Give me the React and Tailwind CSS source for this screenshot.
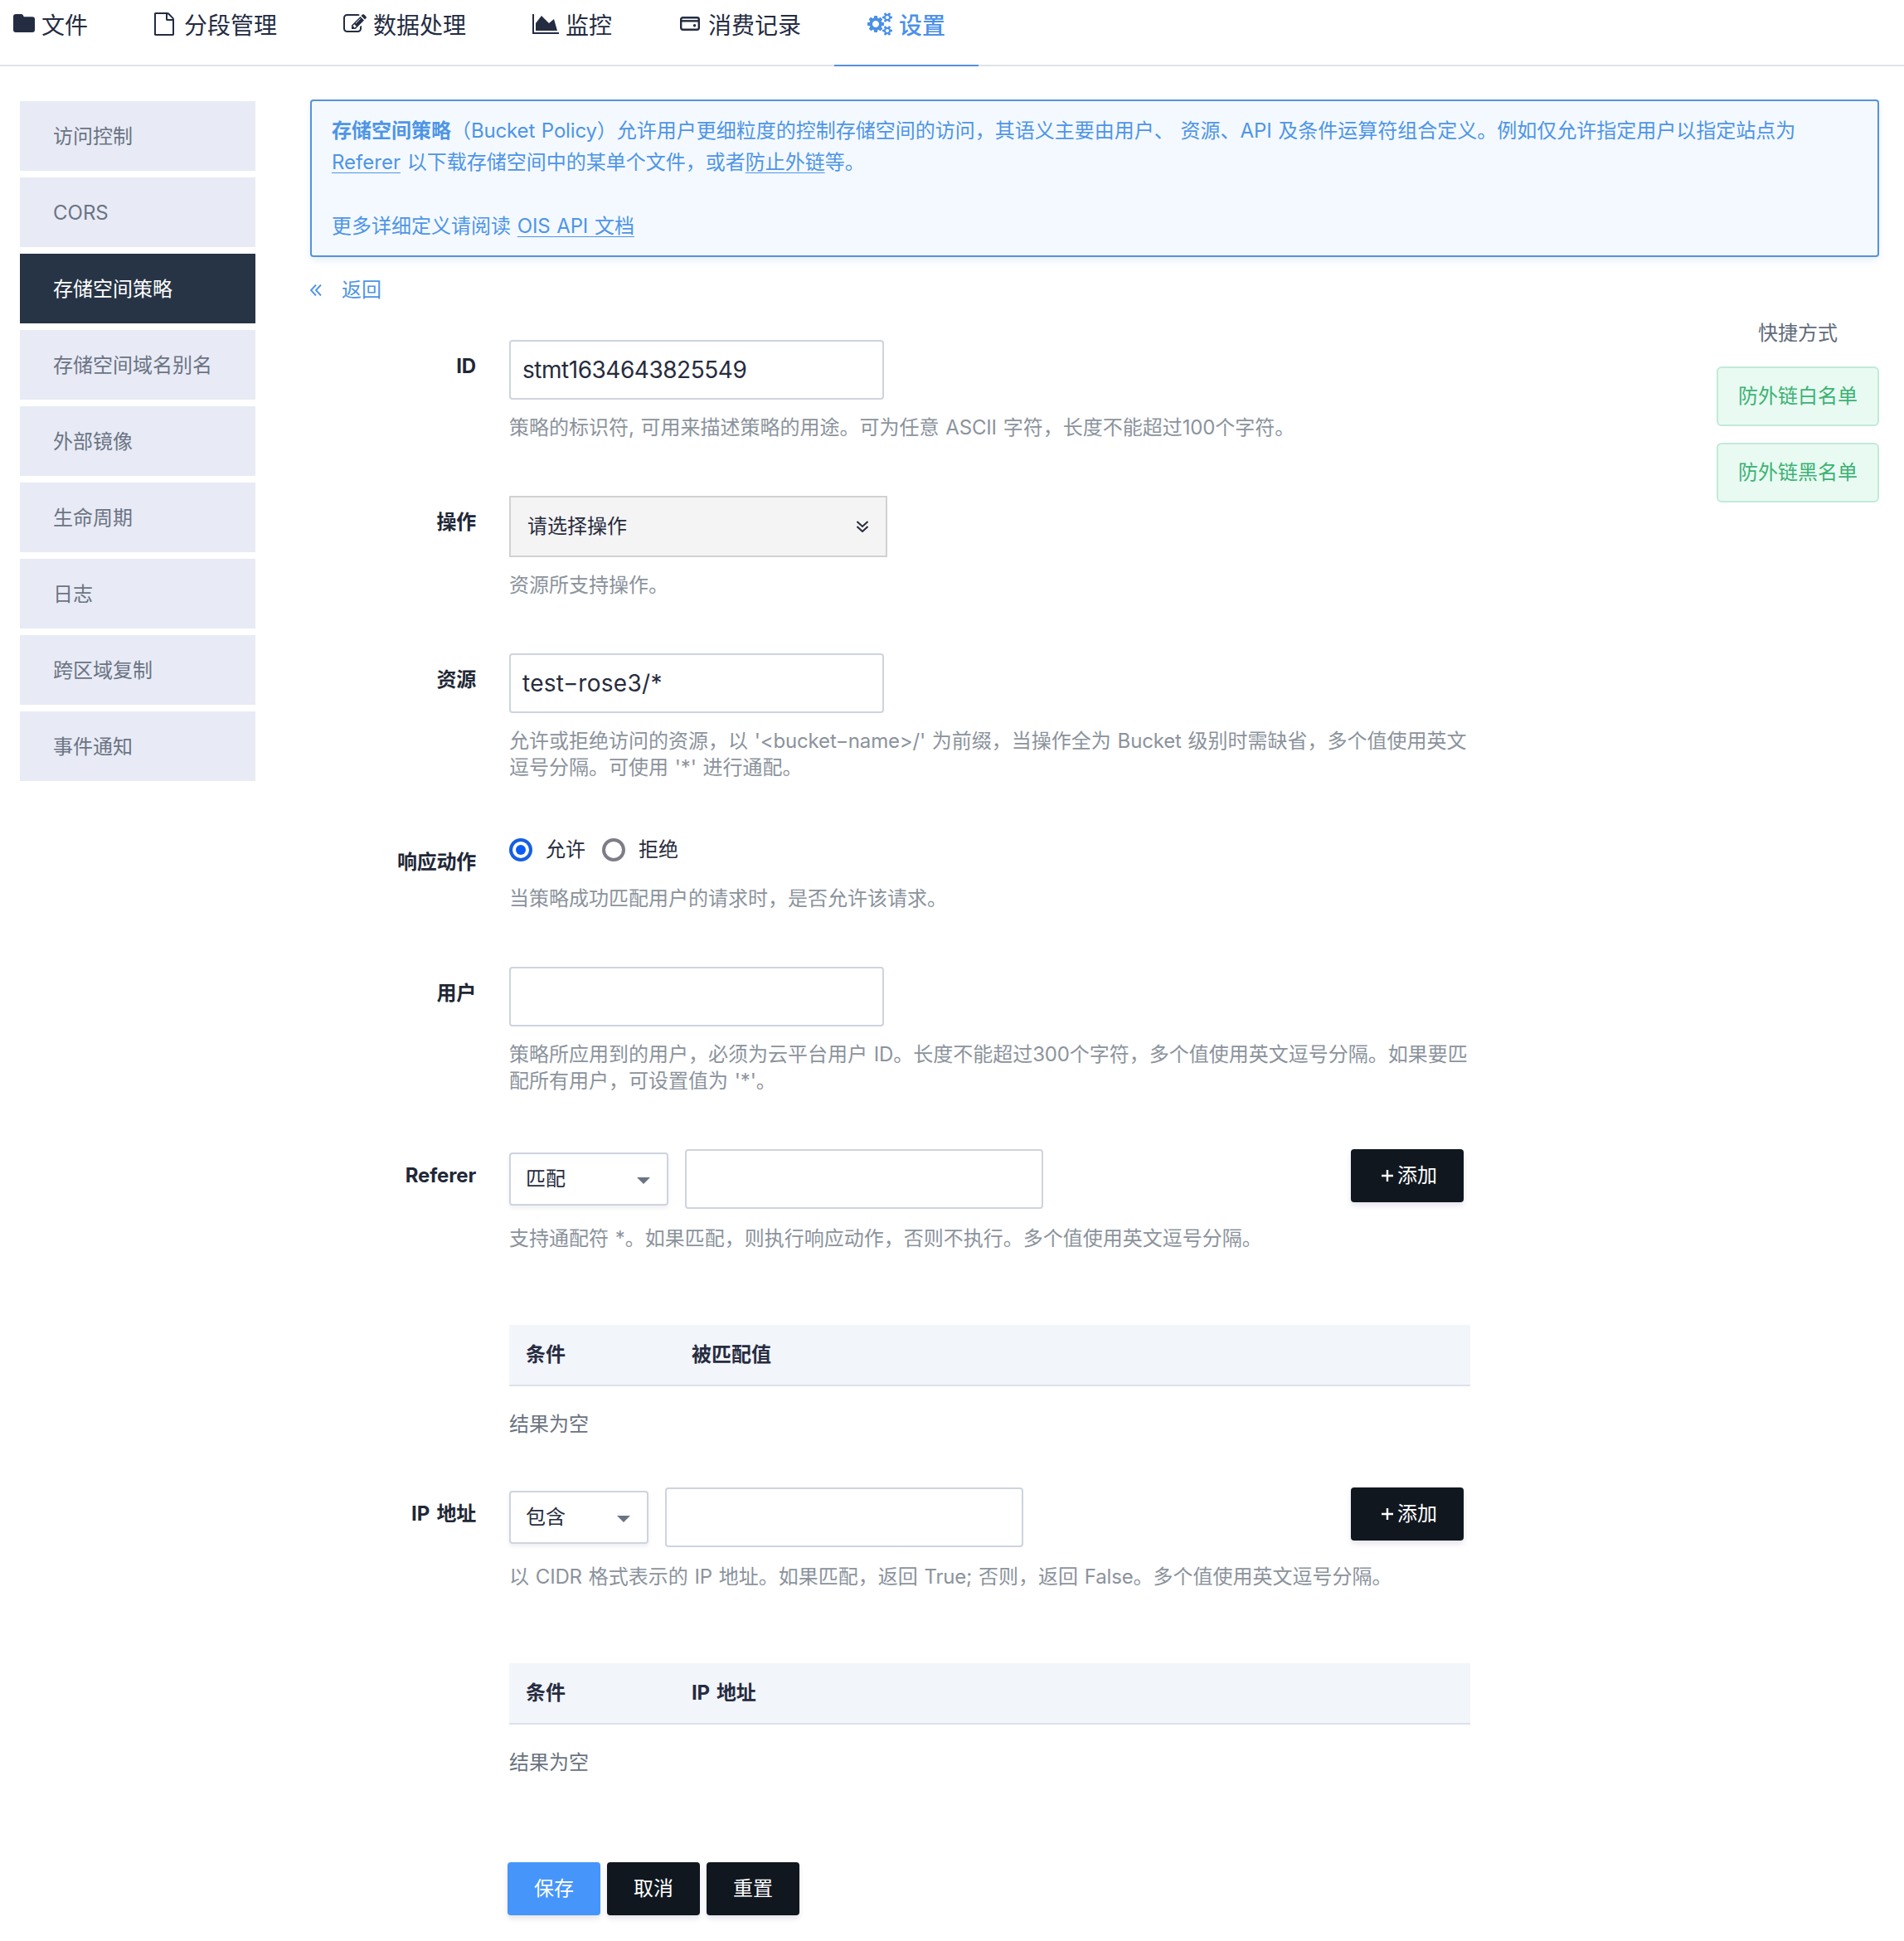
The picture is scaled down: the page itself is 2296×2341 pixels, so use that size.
const LATIN = /([\x20-\x7e]+)/;

/* Long hyphen, as wide as the lower-case letters beside it. */
function Latin({ children }) {
  return children.split(/(-)/).map((part, i) =>
    part === "-" ? (
      <span key={i} className="mx-[0.07em] inline-block scale-x-140">-</span>
    ) : (
      part
    )
  );
}

function T({ children }) {
  return children.split(LATIN).map((part, i) =>
    i % 2 ? (
      <span key={i} className="tracking-[-0.007em] [word-spacing:0.05em]"><Latin>{part}</Latin></span>
    ) : (
      part
    )
  );
}

function Glyph({ viewBox, d, className }) {
  return (
    <svg viewBox={viewBox} fill="currentColor" className={className}>
      <path d={d} />
    </svg>
  );
}

const icons = {
  folder: "M3 0h6.500q1.600 0 2.300 1.300l1 1.900H23q3 0 3 3V19q0 3-3 3H3q-3 0-3-3V3q0-3 3-3z",
  file: "M1596 380q28 28 48 76t20 88v1152q0 40-28 68t-68 28H224q-40 0-68-28t-28-68V96q0-40 28-68t68-28h896q40 0 88 20t76 48zm-444-244v376h376q-10-29-22-41l-313-313q-12-12-41-22zm384 1528V640h-416q-40 0-68-28t-28-68V128H256v1536z",
  edit: "M888 1184l116-116-152-152-116 116v56h96v96h56zm440-720q-16-16-33 1l-350 350q-17 17-1 33t33-1l350-350q17-17 1-33zm80 594v190q0 119-84.5 203.5t-203.5 84.5h-832q-119 0-203.5-84.5t-84.5-203.5v-832q0-119 84.5-203.5t203.5-84.5h832q63 0 117 25 15 7 18 23 3 17-9 29l-49 49q-14 14-32 8-23-6-45-6h-832q-66 0-113 47t-47 113v832q0 66 47 113t113 47h832q66 0 113-47t47-113v-126q0-13 9-22l64-64q15-15 35-7t20 29zm-96-738l288 288-672 672h-288v-288zm444 132l-92 92-288-288 92-92q28-28 68-28t68 28l152 152q28 28 28 68t-28 68z",
  chart: "M2048 1536v128H0V128h128v1408h1920zM1664 512l256 896H256V832l448-576 576 576z",
  cogs: "M896 896q0-106-75-181t-181-75-181 75-75 181 75 181 181 75 181-75 75-181zm768 512q0-52-38-90t-90-38-90 38-38 90q0 53 37.5 90.5t90.5 37.5 90.5-37.5 37.5-90.5zm0-1024q0-52-38-90t-90-38-90 38-38 90q0 53 37.5 90.5t90.5 37.5 90.5-37.5 37.5-90.5zm-384 421v185q0 10-7 19.5t-16 10.5l-155 24q-11 35-32 76 34 48 90 115 7 11 7 20 0 12-7 19-23 30-82.5 89.5t-78.5 59.5q-11 0-21-7l-115-90q-37 19-77 31-11 108-23 155-7 24-30 24h-186q-11 0-20-7.5t-10-17.5l-23-153q-34-10-75-31l-118 89q-7 7-20 7-11 0-21-8-144-133-144-160 0-9 7-19 10-14 41-53t47-61q-23-44-35-82l-152-24q-10-1-17-9.5t-7-19.5v-185q0-10 7-19.5t16-10.5l155-24q11-35 32-76-34-48-90-115-7-11-7-20 0-12 7-20 22-30 82-89t79-59q11 0 21 7l115 90q34-18 77-32 11-108 23-154 7-24 30-24h186q11 0 20 7.5t10 17.5l23 153q34 10 75 31l118-89q8-7 20-7 11 0 21 8 144 133 144 160 0 8-7 19-12 16-42 54t-45 60q23 48 34 82l152 23q10 2 17 10.5t7 19.5zm640 533v140q0 16-149 31-12 27-30 52 51 113 51 138 0 4-4 7-122 71-124 71-8 0-46-47t-52-68q-20 2-30 2t-30-2q-14 21-52 68t-46 47q-2 0-124-71-4-3-4-7 0-25 51-138-18-25-30-52-149-15-149-31v-140q0-16 149-31 13-29 30-52-51-113-51-138 0-4 4-7 4-2 35-20t59-34 30-16q8 0 46 46.5t52 67.5q20-2 30-2t30 2q51-71 92-112l6-2q4 0 124 70 4 3 4 7 0 25-51 138 17 23 30 52 149 15 149 31zm0-1024v140q0 16-149 31-12 27-30 52 51 113 51 138 0 4-4 7-122 71-124 71-8 0-46-47t-52-68q-20 2-30 2t-30-2q-14 21-52 68t-46 47q-2 0-124-71-4-3-4-7 0-25 51-138-18-25-30-52-149-15-149-31v-140q0-16 149-31 13-29 30-52-51-113-51-138 0-4 4-7 4-2 35-20t59-34 30-16q8 0 46 46.5t52 67.5q20-2 30-2t30 2q51-71 92-112l6-2q4 0 124 70 4 3 4 7 0 25-51 138 17 23 30 52 149 15 149 31z",
};

function Wallet() {
  return (
    <svg viewBox="0 0 24 17" fill="none" stroke="currentColor" strokeWidth="2.4" className="mb-[3px] h-[17px] w-6">
      <rect x="1.2" y="1.2" width="21.6" height="14.6" rx="2.2" />
      <path d="M1.100 5.300h21.800" />
      <circle cx="17.600" cy="10.800" r="1.700" fill="currentColor" stroke="none" />
    </svg>
  );
}

const tabs = [
  { label: "文件", icon: <Glyph viewBox="0 0 26 22" d={icons.folder} className="mb-[5px] h-[22px] w-[26px]" />, box: "w-[146px] pl-4 gap-2" },
  { label: "分段管理", icon: <Glyph viewBox="128 0 1536 1792" d={icons.file} className="mb-[3px] h-7 w-6" />, box: "w-[228px] pl-10 gap-3" },
  { label: "数据处理", icon: <Glyph viewBox="0 128 1792 1536" d={icons.edit} className="mb-[3px] h-6 w-7" />, box: "w-[228px] pl-10 gap-2" },
  { label: "监控", icon: <Glyph viewBox="0 128 2048 1536" d={icons.chart} className="mb-[3px] h-6 w-8" />, box: "w-[176px] pl-10 gap-2" },
  { label: "消费记录", icon: <Wallet />, box: "w-[228px] pl-[42px] gap-2.5" },
  { label: "设置", active: true, icon: <Glyph viewBox="0 0 1920 1792" d={icons.cogs} className="mb-[3px] h-7 w-[30px]" />, box: "w-[174px] pl-10 gap-2" },
];

function Tabs() {
  return (
    <nav className="flex h-20 border-b-2 border-[#dde3e9] text-[28px] leading-[40px]">
      {tabs.map((t) => (
        <div
          key={t.label}
          className={`flex h-20 shrink-0 items-start whitespace-nowrap pt-2.5 ${t.box} ${t.active ? "border-b-2 border-[#5592dd] font-medium text-[#4a90e8]" : "text-[#242c42]"}`}
        >
          <span className="flex h-10 shrink-0 items-center">{t.icon}</span>
          <span className="pt-px">{t.label}</span>
        </div>
      ))}
    </nav>
  );
}

const sections = ["访问控制", "CORS", "存储空间策略", "存储空间域名别名", "外部镜像", "生命周期", "日志", "跨区域复制", "事件通知"];

function Sidebar() {
  return (
    <aside className="ml-6 mt-[42px] flex w-[284px] shrink-0 flex-col gap-2">
      {sections.map((s) => (
        <div
          key={s}
          className={`flex h-[84px] items-center pl-10 pt-0.5 ${s === "存储空间策略" ? "bg-[#273445] text-white" : "bg-[#e8ebf5] text-[#6b7484]"}`}
        >
          <span>{s}</span>
        </div>
      ))}
    </aside>
  );
}

const link = "underline decoration-1 underline-offset-[4px] [text-decoration-skip-ink:none]";

function Notice() {
  return (
    <div className="h-[190px] rounded border-2 border-[#5592dd] bg-[#f4f9ff] px-6 pt-[17px] leading-[38.4px] text-[#4e95e6] shadow-[0_4px_8px_rgba(60,120,200,0.12)]">
      <p className="whitespace-nowrap">
        <b className="font-bold">存储空间策略</b>
        <T>（Bucket Policy）允许用户更细粒度的控制存储空间的访问，其语义主要由用户、 资源、API 及条件运算符组合定义。例如仅允许指定用户以指定站点为</T>
      </p>
      <p>
        <a className={link}>Referer</a>
        <T> 以下载存储空间中的某单个文件，或者</T>
        <a className={link}>防止外链</a>等。
      </p>
      <br />
      <p>
        <T>更多详细定义请阅读 </T>
        <a className={link}><T>OIS API 文档</T></a>
      </p>
    </div>
  );
}

function Field({ label, labelClass = "pt-4", className, help, helpClass = "mt-[18px]", children }) {
  return (
    <div className={`flex ${className}`}>
      <div className={`w-[200px] shrink-0 text-right font-bold leading-8 tracking-[-0.01em] text-[#1f2837] [&_span]:[word-spacing:0.12em] ${labelClass}`}>
        <T>{label}</T>
      </div>
      <div className="ml-10 w-[1159px] shrink-0">
        {children}
        <div className={`leading-8 text-[#8b939c] ${helpClass}`}>
          {help.map((h) => (
            <p key={h} className="whitespace-nowrap"><T>{h}</T></p>
          ))}
        </div>
      </div>
    </div>
  );
}

function Input({ value = "", className = "w-[452px] tracking-[-0.017em]" }) {
  return (
    <div className={`flex h-[72px] items-center rounded border-2 border-[#ced4de] bg-white px-3.5 text-[28px] text-[#272c3d] ${className}`}>
      <span><Latin>{value}</Latin></span>
    </div>
  );
}

function Select({ value, className }) {
  return (
    <div className={`flex h-16 items-center justify-between rounded border-2 border-[#ced4de] bg-white pl-[18px] pr-5 text-[#272c3d] shadow-[0_3px_5px_rgba(40,50,80,0.08)] ${className}`}>
      {value}
      <svg viewBox="0 0 16 8" className="mt-1 h-2 w-4 fill-[#6b7484]"><path d="M0 0h16l-8 8z" /></svg>
    </div>
  );
}

function AddButton() {
  return (
    <button className="ml-auto mr-2 flex h-16 w-[136px] items-center gap-[5px] self-start rounded bg-[#10171f] pl-[37px] text-white shadow-[0_4px_6px_rgba(50,30,100,0.12)]">
      <svg viewBox="0 0 14 14" className="h-3.5 w-3.5" stroke="currentColor" strokeWidth="2.400"><path d="M0 7h14M7 0v14" /></svg>
      添加
    </button>
  );
}

function Radio({ on, children }) {
  return (
    <span className="flex items-center gap-4">
      <span className={`flex h-7 w-7 items-center justify-center rounded-full border-4 ${on ? "border-[#165fe0]" : "border-[#7f7c88]"}`}>
        {on && <span className="h-3 w-3 rounded-full bg-[#0a5cf5]" />}
      </span>
      {children}
    </span>
  );
}

function Table({ heads, className }) {
  return (
    <div className={`ml-[240px] w-[1159px] ${className}`}>
      <div className="flex h-[74px] items-center border-b-2 border-[#dce2ea] bg-[#f2f5fa] pl-5 font-bold text-[#272c41] [&_span]:[word-spacing:0.1em]">
        <span className="w-[200px]">{heads[0]}</span>
        <span><T>{heads[1]}</T></span>
      </div>
      <div className="mt-7 h-9 leading-9 text-[#69737f]">结果为空</div>
    </div>
  );
}

function Shortcuts() {
  return (
    <div className="ml-auto mt-4 flex w-[196px] flex-col items-center leading-8 text-[#626c7b]">
      快捷方式
      {["防外链白名单", "防外链黑名单"].map((s, i) => (
        <button
          key={s}
          className={`h-[72px] w-full rounded-md border-2 border-[#c0ebd8] bg-[#e9faf2] text-[#3bb273] ${i ? "mt-5" : "mt-6"}`}
        >
          {s}
        </button>
      ))}
    </div>
  );
}

export default function App() {
  return (
    <div className="h-[2341px] w-[2296px] overflow-hidden bg-white font-[Inter,'Noto_Sans_CJK_SC',sans-serif] text-[24px]">
      <Tabs />
      <div className="flex">
        <Sidebar />
        <main className="ml-[66px] mt-10 w-[1892px]">
          <Notice />
          <div className="mt-5 flex h-10 items-center gap-6 text-[#4e95e6]">
            <svg viewBox="0 0 14 14" fill="none" stroke="currentColor" strokeWidth="1.900" className="h-3.5 w-3.5"><path d="M7 .5 1 7l6 6.500M13 .5 7 7l6 6.500" /></svg>
            返回
          </div>
          <div className="flex">
            <div className="pt-10">
              <Field label="ID" help={["策略的标识符, 可用来描述策略的用途。可为任意 ASCII 字符，长度不能超过100个字符。"]}>
                <Input value="stmt1634643825549" />
              </Field>
              <Field className="mt-[66px]" label="操作" help={["资源所支持操作。"]}>
                <div className="flex h-[74px] w-[456px] items-center justify-between border-2 border-[#d2d2d2] bg-[#f4f4f4] pl-5 pr-[21px] text-[#272c3d]">
                  请选择操作
                  <svg viewBox="0 0 14 14" fill="none" stroke="currentColor" strokeWidth="2" className="h-3.5 w-3.5"><path d="M.5 1 7 7l6.500-6M.5 7 7 13l6.500-6" /></svg>
                </div>
              </Field>
              <Field className="mt-[66px]" label="资源" help={["允许或拒绝访问的资源，以 '<bucket-name>/' 为前缀，当操作全为 Bucket 级别时需缺省，多个值使用英文", "逗号分隔。可使用 '*' 进行通配。"]}>
                <Input value="test-rose3/*" className="w-[452px] tracking-[0.01em]" />
              </Field>
              <Field className="mt-16" label="响应动作" labelClass="pt-[18px]" helpClass="mt-6" help={["当策略成功匹配用户的请求时，是否允许该请求。"]}>
                <div className="flex h-[38px] items-center gap-5 text-[#272c3d]">
                  <Radio on>允许</Radio>
                  <Radio>拒绝</Radio>
                </div>
              </Field>
              <Field className="mt-[66px]" label="用户" help={["策略所应用到的用户，必须为云平台用户 ID。长度不能超过300个字符，多个值使用英文逗号分隔。如果要匹", "配所有用户，可设置值为 '*'。"]}>
                <Input />
              </Field>
              <Field className="mt-[66px]" label="Referer" helpClass="mt-5" help={["支持通配符 *。如果匹配，则执行响应动作，否则不执行。多个值使用英文逗号分隔。"]}>
                <div className="flex items-center gap-5">
                  <Select value="匹配" className="w-48" />
                  <Input className="w-[432px]" />
                  <AddButton />
                </div>
              </Field>
              <Table className="mt-[88px]" heads={["条件", "被匹配值"]} />
              <Field className="mt-[58px]" label="IP 地址" helpClass="mt-5" help={["以 CIDR 格式表示的 IP 地址。如果匹配，返回 True; 否则，返回 False。多个值使用英文逗号分隔。"]}>
                <div className="flex items-center gap-5">
                  <Select value="包含" className="w-[168px]" />
                  <Input className="w-[432px]" />
                  <AddButton />
                </div>
              </Field>
              <Table className="mt-[88px]" heads={["条件", "IP 地址"]} />
              <div className="ml-[238px] mt-[102px] flex gap-2">
                {["保存", "取消", "重置"].map((b, i) => (
                  <button
                    key={b}
                    className={`h-16 w-28 rounded text-white shadow-[0_4px_6px_rgba(50,30,100,0.12)] ${i ? "bg-[#10171f]" : "bg-[#4695fb]"}`}
                  >
                    {b}
                  </button>
                ))}
              </div>
            </div>
            <Shortcuts />
          </div>
        </main>
      </div>
    </div>
  );
}
